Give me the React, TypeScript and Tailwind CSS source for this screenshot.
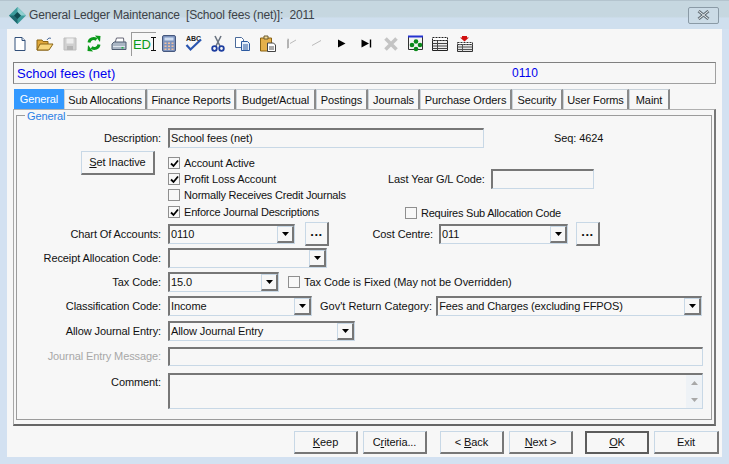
import type { ReactNode } from "react";

const Page = "font-['Liberation_Sans',Arial,sans-serif] text-[11px] leading-none tracking-[-0.1px] text-[#111]";
const inset = "border-t-2 border-l-2 border-r border-b border-t-[#777] border-l-[#777] border-r-[#c8d8e6] border-b-[#c8d8e6]";
const raised = "border border-t-[#c8d8e6] border-l-[#c8d8e6] border-r-[#777] border-b-[#777] border-b-2 border-r-2 bg-[#f7f7f7]";

const Icons: ReactNode[] = [
  // new
  <svg key="new" width="16" height="16" viewBox="0 0 16 16"><path d="M3 1.5h7l3 3v10H3z" fill="#fff" stroke="#33507a" /><path d="M10 1.5v3h3" fill="#dfe8f2" stroke="#33507a" /></svg>,
  // open
  <svg key="open" width="18" height="16" viewBox="0 0 18 16"><path d="M1 14V4h5l1 1.5h5V14z" fill="#e0a83a" stroke="#8a6414" /><path d="M1 14l3-6h13l-4 6z" fill="#f7d67c" stroke="#8a6414" /><path d="M11 4c1-2 3-2.500 4-1.500" fill="none" stroke="#4a6a9a" /></svg>,
  // save (disabled)
  <svg key="save" width="16" height="16" viewBox="0 0 16 16"><path d="M2 2h12v12H2z" fill="#d0d0d0" stroke="#bdbdbd" /><path d="M4.500 2.500h7v5h-7z" fill="#eee" /><path d="M5 10h6v4H5z" fill="#b5b5b5" /></svg>,
  // refresh
  <svg key="refresh" width="16" height="17" viewBox="0 0 16 17"><path d="M3 7.500C3.500 4 7.500 2.500 10.500 4.500" fill="none" stroke="#0b9a1a" strokeWidth="3" /><path d="M9 .5l5.500.5-.5 6z" fill="#0b9a1a" /><path d="M13 9.500C12.500 13 8.500 14.500 5.500 12.500" fill="none" stroke="#0b9a1a" strokeWidth="3" /><path d="M7 16.500l-5.500-.5.500-6z" fill="#0b9a1a" /></svg>,
  // print
  <svg key="print" width="16" height="16" viewBox="0 0 16 16"><path d="M4 7l1.500-5h7L13 7z" fill="#fff" stroke="#667" /><path d="M1 8l2-2h12v7.500H1z" fill="#aab6c4" stroke="#4f5d70" /><path d="M2 10.500h12" stroke="#dfe6ee" /><path d="M10.500 11h2v1.500h-2z" fill="#22b14c" /></svg>,
  // ED cursor
  <div key="ed" className="flex items-center font-['Liberation_Sans_Narrow','Liberation_Sans',sans-serif] text-[13px] text-[#0a9a1a]">
    ED
    <svg width="5" height="14" viewBox="0 0 5 14"><path d="M0 .5h5M0 13.500h5M2.500 .5v13" stroke="#111" /></svg>
  </div>,
  // calculator
  <svg key="calc" width="14" height="17" viewBox="0 0 14 17"><rect x=".5" y=".5" width="13" height="16" rx="1.500" fill="#7d93bd" stroke="#46587e" /><path d="M2.500 2.500h9v3h-9z" fill="#cfdcf0" /><path d="M2.500 7.500h2v1.500h-2zM6 7.500h2v1.500H6zM9.500 7.500h2v1.500h-2zM2.500 10.500h2V12h-2zM6 10.500h2V12H6zM9.500 10.500h2V12h-2zM2.500 13.500h2V15h-2zM6 13.500h2V15H6zM9.500 13.500h2V15h-2z" fill="#f0c0a0" /></svg>,
  // spell check
  <div key="spell" className="relative flex h-[17px] w-[17px] justify-center text-[7px] font-bold text-[#222]">
    ABC
    <svg className="absolute left-0 top-[3px]" width="17" height="14" viewBox="0 0 17 14"><path d="M1.500 7l4 4.500L16 1.500" fill="none" stroke="#2a55b0" strokeWidth="2.200" /></svg>
  </div>,
  // cut
  <svg key="cut" width="14" height="17" viewBox="0 0 14 17"><path d="M4 1l5 10M10 1L5 11" stroke="#6b7480" strokeWidth="1.600" /><circle cx="3.500" cy="13.500" r="2.300" fill="none" stroke="#1f3fa0" strokeWidth="1.800" /><circle cx="10.500" cy="13.500" r="2.300" fill="none" stroke="#1f3fa0" strokeWidth="1.800" /></svg>,
  // copy
  <svg key="copy" width="17" height="16" viewBox="0 0 17 16"><path d="M1.500 1.500h6l2 2v8h-8z" fill="#fff" stroke="#4a6a9a" /><path d="M7.500 5.500h6l2 2v7h-8z" fill="#e6effa" stroke="#2c5aa0" /><path d="M9 9h5M9 11h5M9 13h5" stroke="#2c5aa0" /></svg>,
  // paste
  <svg key="paste" width="17" height="17" viewBox="0 0 17 17"><path d="M1.500 3h11v13h-11z" fill="#e5b04a" stroke="#8a6414" /><path d="M5 1h4v3H5z" fill="#f4dc9a" stroke="#6a5a30" /><path d="M8.500 8h6l2 2v6.500h-8z" fill="#fff" stroke="#444" /><path d="M10 12h5M10 14h5" stroke="#555" /></svg>,
  // first (disabled)
  <svg key="first" width="12" height="12" viewBox="0 0 12 12"><path d="M1.500 1.500v9M1.500 1h1v9" stroke="#b4b4b4" fill="none" /><path d="M4 5.500L10 2" stroke="#bbb" /></svg>,
  // previous (disabled)
  <svg key="prev" width="12" height="12" viewBox="0 0 12 12"><path d="M1 7.500L10 2.500" stroke="#bbb" /></svg>,
  // next
  <svg key="next" width="9" height="9" viewBox="0 0 9 9"><path d="M1 .5l7.500 4L1 8.500z" fill="#000" /></svg>,
  // last
  <svg key="last" width="11" height="9" viewBox="0 0 11 9"><path d="M.5 .5l7.500 4-7.500 4z" fill="#000" /><path d="M9.500 .5v8" stroke="#000" strokeWidth="1.400" /></svg>,
  // delete (disabled)
  <svg key="del" width="16" height="16" viewBox="0 0 16 16"><path d="M2.500 2.500l11 11M13.500 2.500l-11 11" stroke="#c4c4c4" strokeWidth="3.600" /></svg>,
  // green dots
  <svg key="dots" width="16" height="17" viewBox="0 0 16 17"><path d="M.5 1.500h14v13H.5z" fill="#f4f4f4" stroke="#333" /><path d="M0 .5h15v2H0z" fill="#2433d0" /><circle cx="8" cy="6.500" r="2.300" fill="#0a8a1a" /><circle cx="4" cy="10" r="2.300" fill="#0a8a1a" /><circle cx="12" cy="10" r="2.300" fill="#0a8a1a" /><circle cx="8" cy="14" r="2.300" fill="#0a8a1a" /></svg>,
  // table
  <svg key="table" width="16" height="14" viewBox="0 0 16 14"><path d="M.5 3.500h15v10H.5z" fill="#eee" stroke="#222" /><path d="M.5 .5h15v3H.5z" fill="#fff" stroke="#222" strokeDasharray="2 1" /><path d="M.5 6.500h15M.5 9h15M.5 11.500h15" stroke="#444" /><path d="M5.500 3.500v10" stroke="#444" /></svg>,
  // table with arrow
  <svg key="tablearrow" width="16" height="16" viewBox="0 0 16 16"><path d="M5 0h5v1.500h2L7.500 5.500 3 1.500h2z" fill="#d01010" /><path d="M.5 8.500h15v7H.5z" fill="#e4e4e4" stroke="#333" /><path d="M.5 6.500h15v2H.5z" fill="#fff" stroke="#333" strokeDasharray="2 1" /><path d="M.5 11h15M.5 13.500h15M5.500 8.500v7" stroke="#555" /></svg>,
];

const tabs = [
  { label: "General", w: "w-[50px]" },
  { label: "Sub Allocations", w: "w-[83px]" },
  { label: "Finance Reports", w: "w-[89px]" },
  { label: "Budget/Actual", w: "w-[80px]" },
  { label: "Postings", w: "w-[52px]" },
  { label: "Journals", w: "w-[52px]" },
  { label: "Purchase Orders", w: "w-[92px]" },
  { label: "Security", w: "w-[51px]" },
  { label: "User Forms", w: "w-[66px]" },
  { label: "Maint", w: "w-[41px]" },
];

const Label = ({ children, className = "w-[144px]" }: { children: ReactNode; className?: string }) => (
  <div className={`shrink-0 text-right ${className}`}>{children}</div>
);

const Combo = ({ value, w }: { value?: string; w: string }) => (
  <div className={`flex h-[20px] shrink-0 items-center ${inset} bg-[#f8f8f8] ${w}`}>
    <span className="flex-1 pl-px">{value}</span>
    <span className={`flex h-[17px] w-[17px] items-center justify-center ${raised}`}>
      <svg width="7" height="4" viewBox="0 0 7 4"><path d="M0 0h7L3.500 4z" fill="#000" /></svg>
    </span>
  </div>
);

const Check = ({ checked, label, className = "" }: { checked?: boolean; label: string; className?: string }) => (
  <div className={`flex h-[16px] items-center gap-[4px] ${className}`}>
    <span className="flex h-[12px] w-[12px] items-center justify-center border border-[#8f8f8f] bg-[#f8f8f8]">
      {checked && (
        <svg width="9" height="9" viewBox="0 0 9 9"><path d="M1 4.500l2.500 2.500L8 1.500" fill="none" stroke="#000" strokeWidth="1.800" /></svg>
      )}
    </span>
    <span>{label}</span>
  </div>
);

const Dots = () => (
  <div className={`flex h-[24px] w-[24px] shrink-0 items-end justify-center pb-[6px] text-[13px] font-bold tracking-[0.5px] ${raised}`}>...</div>
);

const Btn = ({ children, w, strong }: { children: ReactNode; w: string; strong?: boolean }) => (
  <div
    className={`flex h-[23px] shrink-0 items-center justify-center ${w} ${
      strong ? "border-2 border-[#5c5c5c] bg-[#f7f7f7]" : raised
    }`}
  >
    {children}
  </div>
);

const App = () => {
  return (
    <div className={`flex h-[464px] w-[729px] flex-col bg-[#d3e1f1] ${Page}`}>
      {/* title bar */}
      <div className="flex h-[29px] shrink-0 items-center border-t border-[#b4c4ce] bg-[linear-gradient(180deg,#c6d7e0_55%,#cfdfee_62%)] pl-[9px] pr-[10px]">
        <svg width="17" height="17" viewBox="0 0 17 17">
          <path d="M8.500 0L17 8.500 8.500 17 0 8.500z" fill="#3d9c9c" />
          <path d="M8.500 0L17 8.500H8.500z" fill="#8fd0d0" />
          <path d="M8.500 17L0 8.500h8.500z" fill="#1f6a70" />
          <path d="M8.500 5L12 8.500 8.500 12 5 8.500z" fill="#0f4a50" />
        </svg>
        <span className="ml-[3px] whitespace-pre text-[12px] tracking-[-0.18px] text-[#3c4248]">General Ledger Maintenance  [School fees (net)]:  2011</span>
        <div className="ml-auto flex h-[17px] w-[31px] items-center justify-center rounded-[2px] border border-[#8a9aa6] bg-[#cbdbe6]">
          <svg width="13" height="10" viewBox="0 0 13 10">
            <path d="M1.500 1l10 8M11.500 1l-10 8" stroke="#69747c" strokeWidth="3" />
            <path d="M1.500 1l10 8M11.500 1l-10 8" stroke="#e8eef2" strokeWidth="1" />
          </svg>
        </div>
      </div>

      <div className="mx-[7px] flex min-h-0 flex-1 flex-col bg-[#f7f7f7]">
        {/* toolbar */}
        <div className="flex h-[33px] shrink-0 items-center pb-[4px] pl-px">
          {Icons.map((icon, i) => (
            <div
              key={i}
              className={`flex h-[24px] shrink-0 items-center justify-center ${i === 5 ? "w-[25px] border-l border-t border-[#9a9a9a]" : "w-[24.7px]"}`}
            >
              {icon}
            </div>
          ))}
        </div>

        {/* account header */}
        <div className="mx-[6px] flex h-[22px] w-[703px] shrink-0 items-center border border-[#a0a0a0] border-t-[#808080] border-l-[#808080] text-[13px] tracking-normal text-[#0000ee]">
          <span className="ml-[3px] w-[495px]">School fees (net)</span>
          <span className="text-[12px]">0110</span>
        </div>

        {/* tabs */}
        <div className="mx-[6px] mt-[5px] flex h-[20px] shrink-0 items-stretch pl-px">
          {tabs.map((t, i) => (
            <div
              key={t.label}
              className={`flex shrink-0 items-center justify-center ${t.w} ${
                i === 0
                  ? "bg-[#3399ff] text-white"
                  : "border-l border-r-2 border-t border-l-[#c8d2da] border-r-[#8a8a8a] border-t-[#c8d2da] pt-px"
              }`}
            >
              {t.label}
            </div>
          ))}
        </div>

        {/* tab page */}
        <div className="mx-[6px] flex h-[317px] w-[703px] shrink-0 flex-col border border-l-[#a8a8a8] border-t-[#b0b0b0] border-r-2 border-b-2 border-r-[#777] border-b-[#666] px-[2px] pt-[5px]">
          <div className="relative h-[305px] w-[696px] border border-[#9c9c9c] pt-[12px]">
            <span className="absolute -top-[5px] left-[8px] bg-[#f7f7f7] px-[2px] text-[#2b80e6]">General</span>

            <div className="flex h-[20px] items-center gap-[7px]">
              <Label>Description:</Label>
              <div className={`flex h-[20px] w-[316px] items-center pl-px ${inset}`}>School fees (net)</div>
              <span className="ml-[63px]">Seq: 4624</span>
            </div>

            <div className="mt-[3px] flex">
              <div className="w-[151px] shrink-0 pl-[64px]">
                <div className={`flex h-[24px] w-[74px] items-center justify-center ${raised}`}>
                  <span><span className="underline">S</span>et Inactive</span>
                </div>
              </div>
              <div className="w-[215px] shrink-0 pt-[4px]">
                <Check checked label="Account Active" />
                <Check checked label="Profit Loss Account" />
                <Check label="Normally Receives Credit Journals" className="tracking-[-0.21px]" />
                <Check checked label="Enforce Journal Descriptions" className="mt-px tracking-[-0.2px]" />
              </div>
              <div className="flex flex-col pt-[18px]">
                <div className="flex h-[20px] items-center gap-[6px]">
                  <span className="whitespace-nowrap pl-[5px]">Last Year G/L Code:</span>
                  <div className={`h-[20px] w-[103px] ${inset}`} />
                </div>
                <div className="ml-[22px] mt-[16px]">
                  <Check label="Requires Sub Allocation Code" className="tracking-[-0.22px]" />
                </div>
              </div>
            </div>

            <div className="mt-[1px] flex h-[24px] items-center">
              <Label>Chart Of Accounts:</Label>
              <div className="ml-[7px] mr-[10px]"><Combo value="0110" w="w-[127px]" /></div>
              <Dots />
              <Label className="w-[104px]">Cost Centre:</Label>
              <div className="ml-[6px] mr-[8px]"><Combo value="011" w="w-[129px]" /></div>
              <Dots />
            </div>

            <div className="mt-[2px] flex h-[20px] items-center gap-[7px]">
              <Label>Receipt Allocation Code:</Label>
              <Combo w="w-[159px]" />
            </div>

            <div className="mt-[4px] flex h-[20px] items-center gap-[7px]">
              <Label>Tax Code:</Label>
              <Combo value="15.0" w="w-[111px]" />
              <div className="ml-[2px]"><Check label="Tax Code is Fixed (May not be Overridden)" className="tracking-[-0.05px]" /></div>
            </div>

            <div className="mt-[4px] flex h-[20px] items-center">
              <Label>Classification Code:</Label>
              <div className="ml-[7px] mr-[8px]"><Combo value="Income" w="w-[144px]" /></div>
              <span className="mr-[4px] whitespace-nowrap tracking-normal">Gov't Return Category:</span>
              <Combo value="Fees and Charges (excluding FFPOS)" w="w-[266px]" />
            </div>

            <div className="mt-[5px] flex h-[20px] items-center gap-[7px]">
              <Label>Allow Journal Entry:</Label>
              <Combo value="Allow Journal Entry" w="w-[187px]" />
            </div>

            <div className="mt-[6px] flex h-[19px] items-center gap-[7px]">
              <Label><span className="text-[#a8a8a8]">Journal Entry Message:</span></Label>
              <div className={`h-[19px] w-[535px] ${inset}`} />
            </div>

            <div className="mt-[7px] flex gap-[7px]">
              <Label><span className="mt-[4px] block">Comment:</span></Label>
              <div className={`flex h-[36px] w-[535px] justify-end ${inset}`}>
                <div className="flex w-[16px] flex-col items-center justify-between bg-[#eef2f6] py-[6px]">
                  <svg width="7" height="4" viewBox="0 0 7 4"><path d="M0 4h7L3.500 0z" fill="#a8a8a8" /></svg>
                  <svg width="7" height="4" viewBox="0 0 7 4"><path d="M0 0h7L3.500 4z" fill="#a8a8a8" /></svg>
                </div>
              </div>
            </div>
          </div>
        </div>

        {/* action buttons */}
        <div className="mx-[6px] mt-[5px] flex h-[23px] w-[706px] shrink-0 items-center">
          <div className="ml-[281px] flex gap-[5px]">
            <Btn w="w-[64px]"><span><span className="underline">K</span>eep</span></Btn>
            <Btn w="w-[64px]"><span>C<span className="underline">r</span>iteria...</span></Btn>
          </div>
          <div className="ml-[13px] flex gap-[5px]">
            <Btn w="w-[64px]"><span>&lt; <span className="underline">B</span>ack</span></Btn>
            <Btn w="w-[64px]"><span><span className="underline">N</span>ext &gt;</span></Btn>
          </div>
          <div className="ml-[12px] flex gap-[5px]">
            <Btn w="w-[64px]" strong><span><span className="underline">O</span>K</span></Btn>
            <Btn w="w-[65px]">Exit</Btn>
          </div>
        </div>
      </div>
      <div className="h-[7px] shrink-0" />
    </div>
  );
};

export default App;
